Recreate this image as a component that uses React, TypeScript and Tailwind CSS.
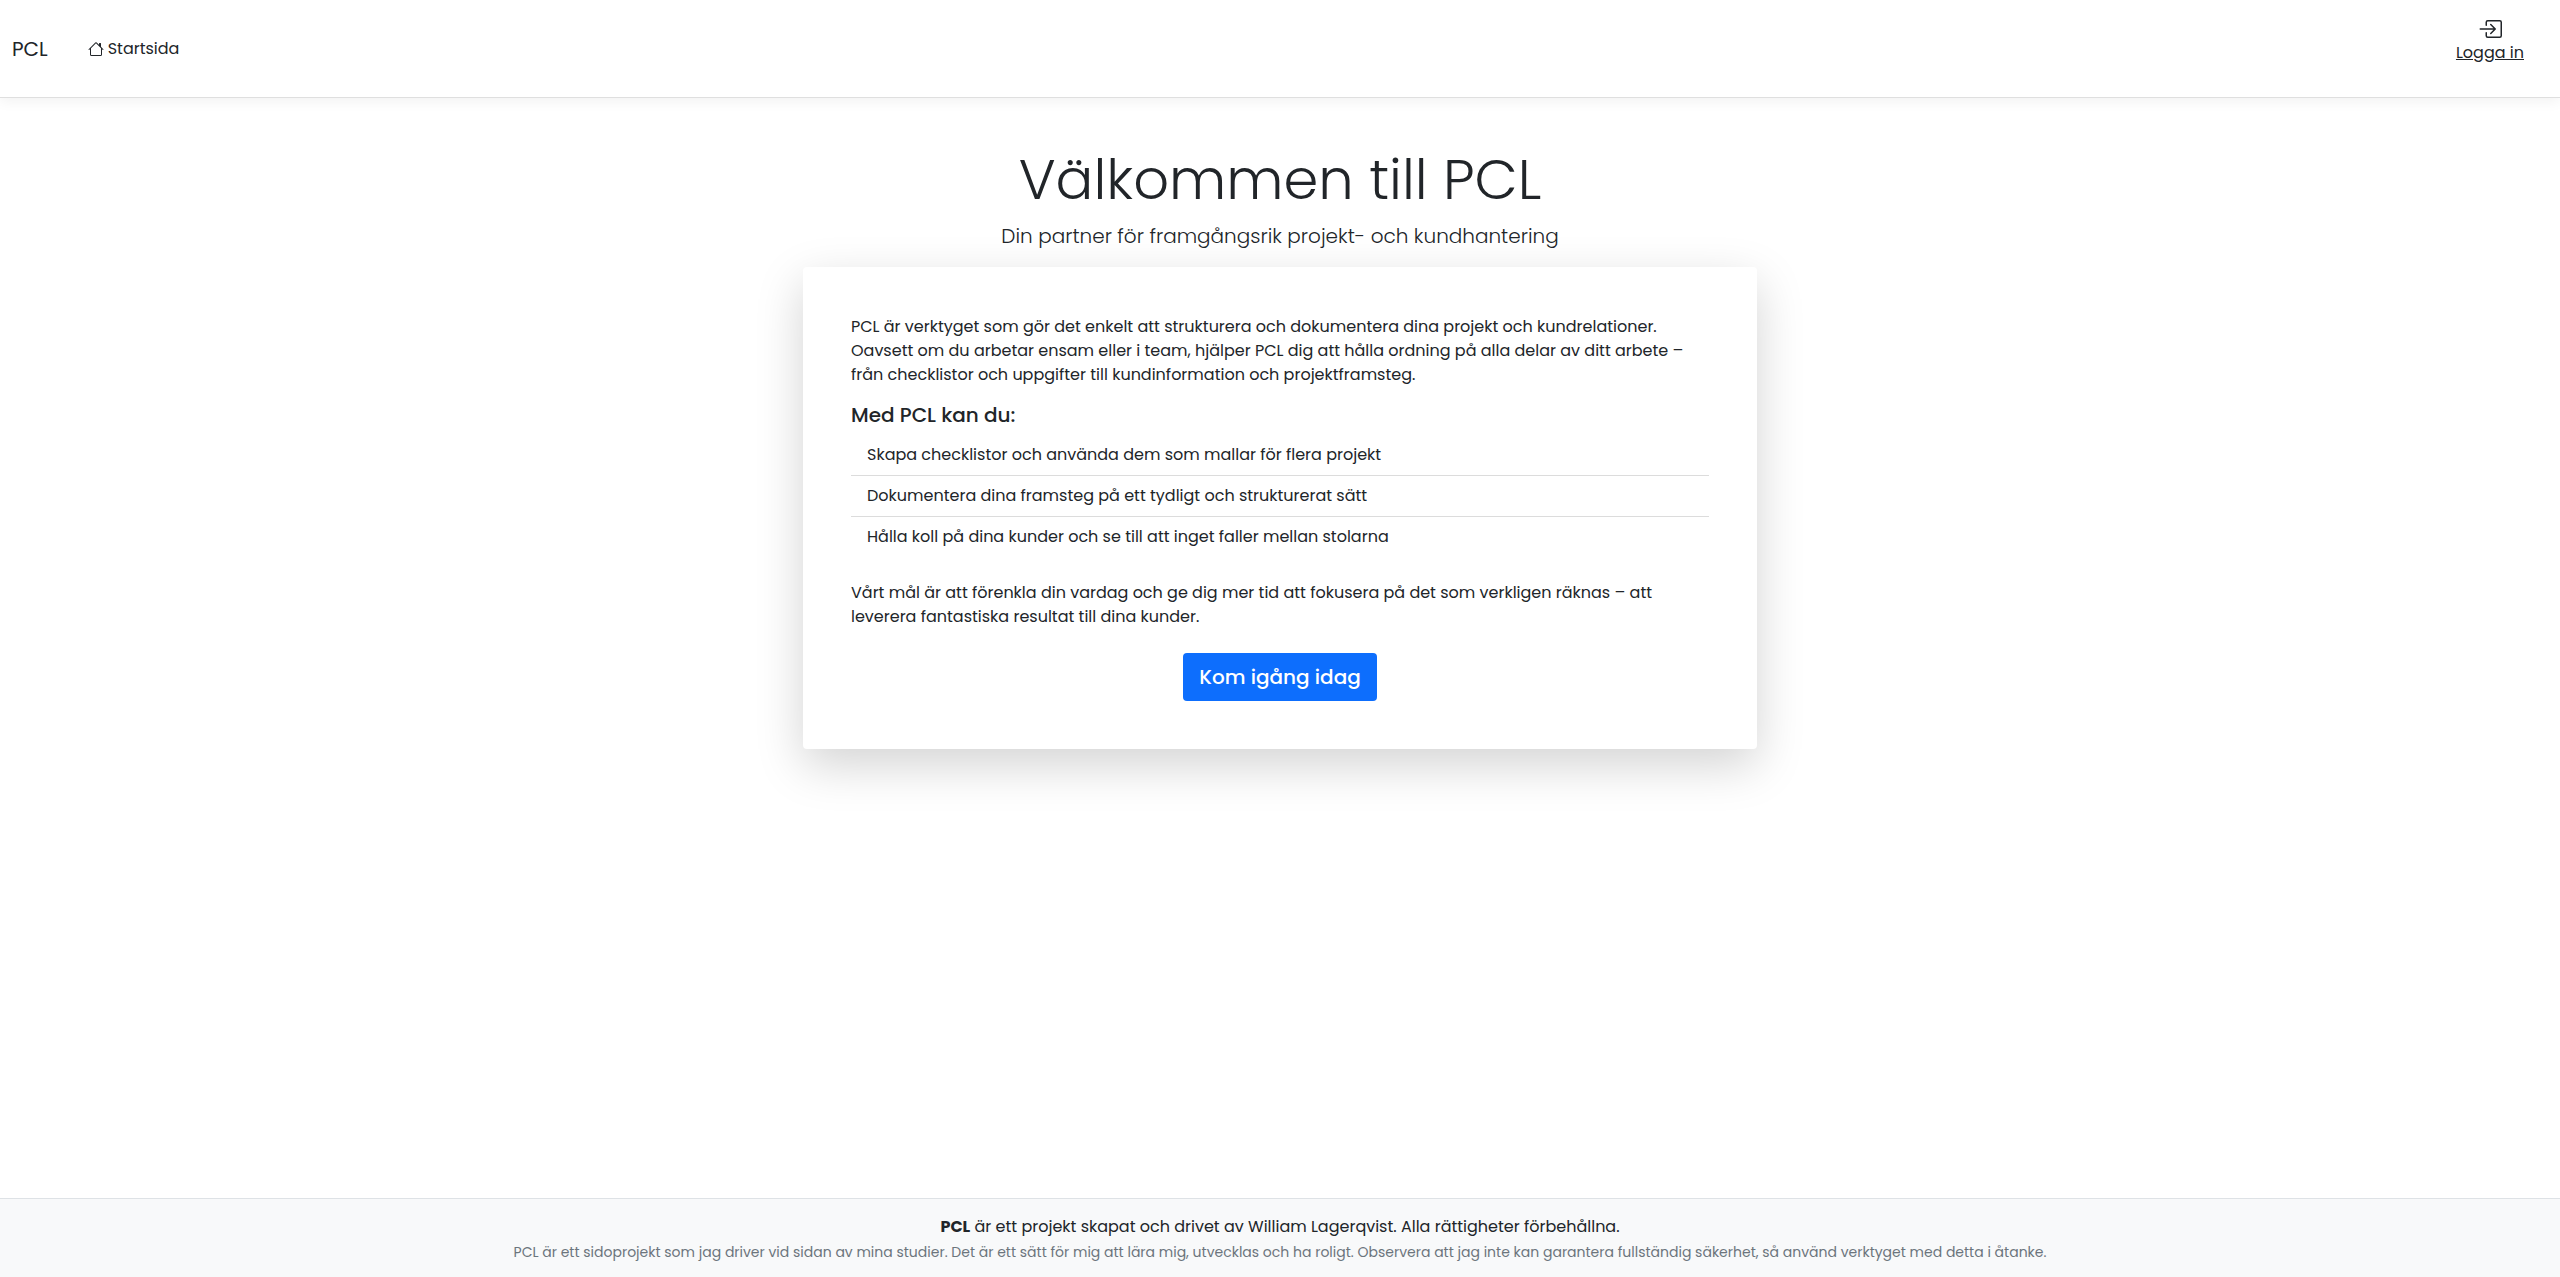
import React from "react";
import { BsBoxArrowInRight, BsHouse } from "react-icons/bs";

const features = [
  "Skapa checklistor och använda dem som mallar för flera projekt",
  "Dokumentera dina framsteg på ett tydligt och strukturerat sätt",
  "Hålla koll på dina kunder och se till att inget faller mellan stolarna",
];

function Header() {
  return (
    <header className="flex min-h-[98px] items-center border-b border-[#dfdfdf] bg-white pr-9 pl-3 shadow-[0_4px_12px_rgba(0,0,0,0.05)]">
      <a href="#" className="text-xl">
        PCL
      </a>
      <nav className="ml-10 flex">
        <a href="#" className="flex items-center gap-1">
          <BsHouse size={16} aria-hidden="true" />
          Startsida
        </a>
      </nav>
      <a href="#" className="mt-[17px] ml-auto flex flex-col items-center self-start underline">
        <BsBoxArrowInRight size={24} aria-hidden="true" />
        Logga in
      </a>
    </header>
  );
}

function IntroCard() {
  return (
    <section className="w-full max-w-[954px] rounded bg-white p-12 shadow-[0_16px_48px_rgba(0,0,0,0.175)]">
      <p>
        PCL är verktyget som gör det enkelt att strukturera och dokumentera dina projekt och
        kundrelationer. Oavsett om du arbetar ensam eller i team, hjälper PCL dig att hålla ordning
        på alla delar av ditt arbete – från checklistor och uppgifter till kundinformation och
        projektframsteg.
      </p>
      <h2 className="mt-4 mb-2 text-xl leading-6 font-medium">Med PCL kan du:</h2>
      <ul className="mb-6 divide-y divide-[#dcdcdc]">
        {features.map((feature) => (
          <li key={feature} className="px-4 py-2">
            {feature}
          </li>
        ))}
      </ul>
      <p>
        Vårt mål är att förenkla din vardag och ge dig mer tid att fokusera på det som verkligen
        räknas – att leverera fantastiska resultat till dina kunder.
      </p>
      <div className="mt-6 flex justify-center">
        <button
          type="button"
          className="h-12 rounded bg-[#0d6efd] px-4 text-xl font-medium text-white"
        >
          Kom igång idag
        </button>
      </div>
    </section>
  );
}

function Footer() {
  return (
    <footer className="border-t border-[#dee2e6] bg-[#f8f9fa] px-4 pt-4 pb-3 text-center">
      <p>
        <strong className="font-bold">PCL</strong> är ett projekt skapat och drivet av William
        Lagerqvist. Alla rättigheter förbehållna.
      </p>
      <p className="text-sm leading-[26px] text-[#6c757d]">
        PCL är ett sidoprojekt som jag driver vid sidan av mina studier. Det är ett sätt för mig att
        lära mig, utvecklas och ha roligt. Observera att jag inte kan garantera fullständig
        säkerhet, så använd verktyget med detta i åtanke.
      </p>
    </footer>
  );
}

export default function App() {
  return (
    <div className="flex min-h-screen flex-col bg-white font-['Poppins','Open_Sans',sans-serif] text-base leading-6 text-[#212529]">
      <Header />
      <main className="flex flex-1 flex-col items-center px-4 pt-12 pb-12">
        <h1 className="mb-2 text-center text-[56px] leading-[67px] font-light">
          Välkommen till PCL
        </h1>
        <p className="mb-4 text-center text-xl leading-[30px] font-light">
          Din partner för framgångsrik projekt- och kundhantering
        </p>
        <IntroCard />
      </main>
      <Footer />
    </div>
  );
}
